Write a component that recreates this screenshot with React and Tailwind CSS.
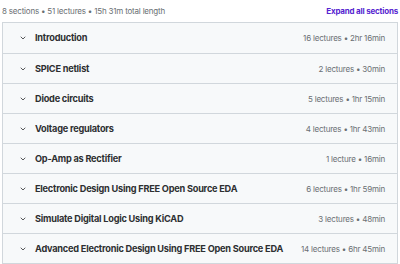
import { ChevronDown } from 'lucide-react'

const SECTIONS = [
  { title: 'Introduction', stats: '16 lectures • 2hr 16min' },
  { title: 'SPICE netlist', stats: '2 lectures • 30min' },
  { title: 'Diode circuits', stats: '5 lectures • 1hr 15min' },
  { title: 'Voltage regulators', stats: '4 lectures • 1hr 43min' },
  { title: 'Op-Amp as Rectifier', stats: '1 lecture • 16min' },
  { title: 'Electronic Design Using FREE Open Source EDA', stats: '6 lectures • 1hr 59min' },
  { title: 'Simulate Digital Logic Using KiCAD', stats: '3 lectures • 48min' },
  { title: 'Advanced Electronic Design Using FREE Open Source EDA', stats: '14 lectures • 6hr 45min' },
]

export default function App() {
  return (
    <div className="w-[400px] h-[264px] bg-white overflow-hidden px-[2px] font-['Inter',sans-serif] text-[#2d2f31]">
      {/* Summary */}
      <div className="flex items-center justify-between h-[22px] pb-[1px]">
        <span className="text-[8px] tracking-tight text-[#6a6f73]">8 sections • 51 lectures • 15h 31m total length</span>
        <button className="text-[8px] tracking-tight font-bold text-[#5624d0]">Expand all sections</button>
      </div>

      {/* Curriculum */}
      <div className="border border-[#d1d7dc]">
        {SECTIONS.map((s, i) => (
          <div
            key={s.title}
            className={`flex items-center h-[30px] bg-[#f7f9fa] pl-[16px] pr-[12px] ${i > 0 ? 'border-t border-[#d1d7dc]' : ''}`}
          >
            <ChevronDown size={8} strokeWidth={2.4} className="text-[#2d2f31] flex-shrink-0" />
            <span className="ml-[8px] text-[9.2px] tracking-tight font-bold flex-1 whitespace-nowrap">{s.title}</span>
            <span className="text-[8px] tracking-tight text-[#6a6f73] flex-shrink-0 ml-2">{s.stats}</span>
          </div>
        ))}
      </div>
    </div>
  )
}
